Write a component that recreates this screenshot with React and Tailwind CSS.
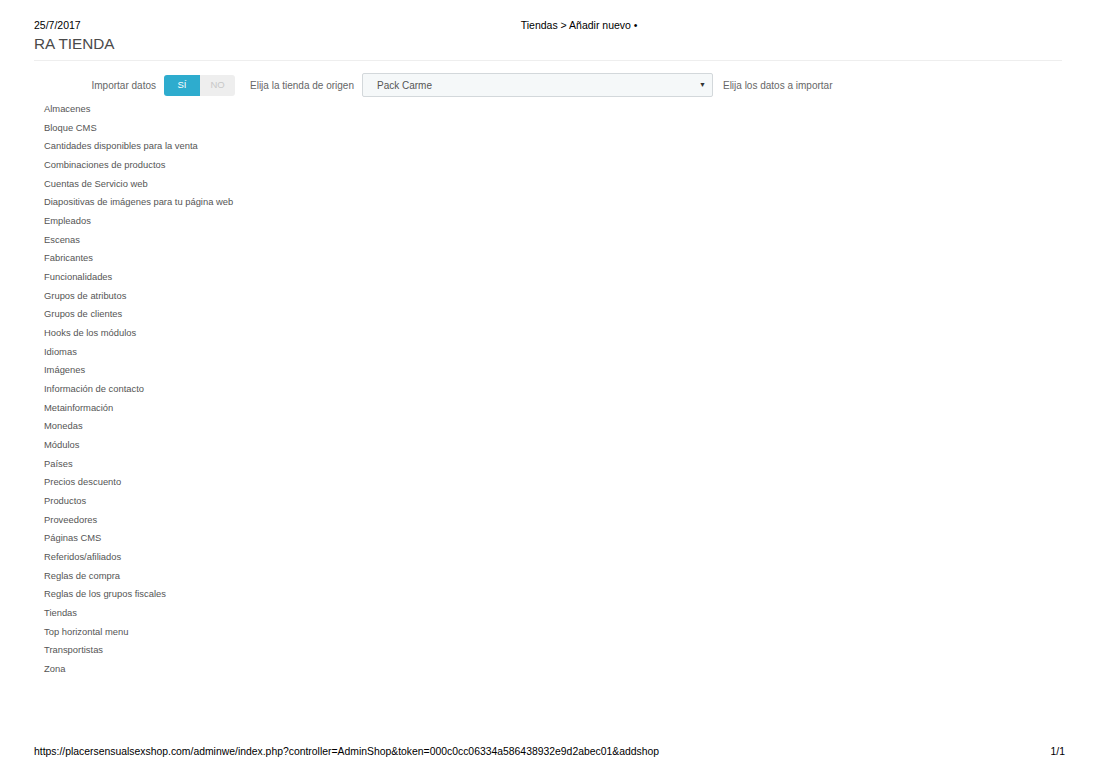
const items = [
  'Almacenes',
  'Bloque CMS',
  'Cantidades disponibles para la venta',
  'Combinaciones de productos',
  'Cuentas de Servicio web',
  'Diapositivas de imágenes para tu página web',
  'Empleados',
  'Escenas',
  'Fabricantes',
  'Funcionalidades',
  'Grupos de atributos',
  'Grupos de clientes',
  'Hooks de los módulos',
  'Idiomas',
  'Imágenes',
  'Información de contacto',
  'Metainformación',
  'Monedas',
  'Módulos',
  'Países',
  'Precios descuento',
  'Productos',
  'Proveedores',
  'Páginas CMS',
  'Referidos/afiliados',
  'Reglas de compra',
  'Reglas de los grupos fiscales',
  'Tiendas',
  'Top horizontal menu',
  'Transportistas',
  'Zona',
]

export default function App() {
  return (
    <div className="flex h-[778px] w-[1100px] flex-col bg-white font-['Liberation_Sans',Arial,sans-serif]">
      {/* print header */}
      <div className="flex pl-[34px] pt-[19px] text-[10.5px] leading-[12px] text-black">
        <span>25/7/2017</span>
        <span className="ml-[440px]">Tiendas &gt; Añadir nuevo •</span>
      </div>

      <div className="pl-[34px] pr-[38px]">
        <h1 className="mt-[4px] border-b border-[#eeeeee] pb-[7px] text-[15.3px] leading-[18px] text-[#4a4a4a]">
          RA TIENDA
        </h1>

        <div className="mt-[12px] flex h-[24px] items-center text-[10px] text-[#666]">
          <span className="w-[122px] text-right">Importar datos</span>
          <div className="ml-[8px] flex h-[21px] text-[9.5px]">
            <span className="flex w-[36px] items-center justify-center rounded-l-[3px] bg-[#2eacce] text-white">SÍ</span>
            <span className="flex w-[35px] items-center justify-center rounded-r-[3px] bg-[#eeeeee] text-[#c8c8c8]">NO</span>
          </div>
          <span className="ml-[15px]">Elija la tienda de origen</span>
          <div className="ml-[8px] flex h-[24px] w-[351px] items-center justify-between rounded-[2px] border border-[#d3d8db] bg-[#f5f8f9] pl-[14px] pr-[6px] text-[#555]">
            <span>Pack Carme</span>
            <span className="text-[7px] text-[#333]">▼</span>
          </div>
          <span className="ml-[10px]">Elija los datos a importar</span>
        </div>

        <ul className="mt-[3px] pl-[10px] text-[9.4px] leading-[18.67px] text-[#555]">
          {items.map((item) => (
            <li key={item}>{item}</li>
          ))}
        </ul>
      </div>

      {/* print footer */}
      <div className="mt-auto mb-[20px] flex justify-between pl-[34px] pr-[35px] text-[10.4px] leading-[12px] text-black">
        <span>https://placersensualsexshop.com/adminwe/index.php?controller=AdminShop&amp;token=000c0cc06334a586438932e9d2abec01&amp;addshop</span>
        <span>1/1</span>
      </div>
    </div>
  )
}
